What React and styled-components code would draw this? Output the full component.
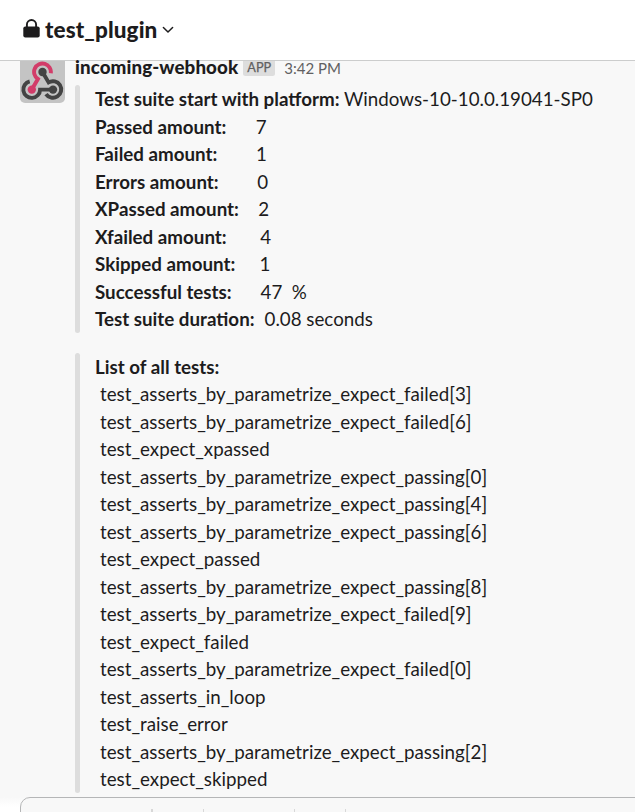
import React from 'react';
import styled, { createGlobalStyle } from 'styled-components';

const GlobalStyle = createGlobalStyle`
  * { box-sizing: border-box; }
  body { margin: 0; background: #f8f8f8; }
`;

const Page = styled.div`
  width: 635px;
  height: 812px;
  overflow: hidden;
  display: flex;
  flex-direction: column;
  background: #f8f8f8;
  color: #1d1c1d;
  font: 400 18.75px/27.5px Lato, sans-serif;
`;

const Header = styled.header`
  flex: none;
  height: 61px;
  display: flex;
  align-items: center;
  padding-left: 23px;
  background: #fff;
  border-bottom: 1px solid #cccdcd;
`;

const LockIcon = styled.svg`
  flex: none;
  width: 17px;
  height: 19px;
  margin-top: -3px;
`;

const ChannelName = styled.h1`
  margin: 0 0 0 5px;
  font-size: 22.5px;
  line-height: 30px;
  font-weight: 900;
  letter-spacing: 0.1px;
`;

const Chevron = styled.svg`
  flex: none;
  width: 12px;
  height: 8px;
  margin: -1px 0 0 5px;
`;

const MessageList = styled.main`
  flex: none;
  height: 736px;
`;

const Message = styled.article`
  display: flex;
  align-items: flex-start;
  gap: 10px;
  padding-left: 20px;
`;

const Avatar = styled.svg`
  flex: none;
  width: 45px;
  height: 42px;
  border-radius: 0 0 5px 5px;
  background: #c4c4c4;
`;

const Content = styled.div`
  flex: 1;
  min-width: 0;
`;

const Sender = styled.div`
  height: 24.25px;
  display: flex;
  align-items: flex-start;
  white-space: nowrap;
`;

const SenderName = styled.span`
  font-weight: 900;
  line-height: 12px;
  letter-spacing: 0.09px;
`;

const AppBadge = styled.span`
  width: 32px;
  height: 15px;
  margin-left: 5px;
  border-radius: 0 0 2.5px 2.5px;
  background: #dddddd;
  color: #616061;
  text-align: center;
  font-size: 12.7px;
  line-height: 12px;
  -webkit-text-stroke: 0.25px #616061;
`;

const Time = styled.time`
  margin-left: 9px;
  color: #616061;
  font-size: 15px;
  line-height: 15px;
`;

const Attachment = styled.section`
  display: flex;
  gap: 15px;
  margin-bottom: 20px;
  white-space: nowrap;
`;

const Bar = styled.div`
  width: 5px;
  border-radius: 5px;
  background: #dddddd;
`;

const Row = styled.div`
  display: flex;
  height: 27.5px;
`;

const Label = styled.span`
  width: ${(p) => p.$width}px;
  font-weight: 700;
`;

const Value = styled.span`
  white-space: pre;
`;

const TestName = styled.div`
  height: 27.5px;
  padding-left: 5px;
`;

const ComposerArea = styled.footer`
  flex: none;
  height: 15px;
  padding-left: 20px;
  background: linear-gradient(#f8f8f8, #fff 10px);
`;

const Composer = styled.div`
  width: 640px;
  height: 40px;
  border: 1px solid #b5b6b7;
  border-radius: 10px;
  background: #f8f8f8;
  display: flex;
  padding: 11px 0 0 130px;
`;

const Divider = styled.i`
  flex: none;
  width: ${(p) => p.$width || 1}px;
  height: 18px;
  margin-right: ${(p) => p.$gap}px;
  background: #d8d8d8;
`;

const summary = [
  ['Test suite start with platform:', 'Windows-10-10.0.19041-SP0', 249],
  ['Passed amount:', '7', 160.7],
  ['Failed amount:', '1', 161],
  ['Errors amount:', '0', 162.2],
  ['XPassed amount:', '2', 163.2],
  ['Xfailed amount:', '4', 165.2],
  ['Skipped amount:', '1', 164.5],
  ['Successful tests:', '47  %', 165.5],
  ['Test suite duration:', '0.08 seconds', 169.5],
];

const param = 'test_asserts_by_parametrize_expect_';
const tests = [
  param + 'failed[3]',
  param + 'failed[6]',
  'test_expect_xpassed',
  param + 'passing[0]',
  param + 'passing[4]',
  param + 'passing[6]',
  'test_expect_passed',
  param + 'passing[8]',
  param + 'failed[9]',
  'test_expect_failed',
  param + 'failed[0]',
  'test_asserts_in_loop',
  'test_raise_error',
  param + 'passing[2]',
  'test_expect_skipped',
];

export default function App() {
  return (
    <Page>
      <GlobalStyle />
      <Header>
        <LockIcon viewBox="0 0 17 19">
          <rect x="0.3" y="7.5" width="16.4" height="11" rx="2" fill="#1d1c1d" />
          <path d="M3.9 9V5.6a4.6 4.6 0 0 1 9.2 0V9" fill="none" stroke="#1d1c1d" strokeWidth="1.9" />
        </LockIcon>
        <ChannelName>test_plugin</ChannelName>
        <Chevron viewBox="0 0 12 8" fill="none" stroke="#1d1c1d" strokeWidth="1.5">
          <path d="M1.4 1.5 6 6l4.6-4.5" strokeLinecap="round" strokeLinejoin="round" />
        </Chevron>
      </Header>
      <MessageList>
        <Message>
          <Avatar viewBox="0 3 45 42" fill="none" strokeWidth="3.9">
            <g stroke="#434343">
              <path d="M22.5 14 28.6 24.4A8.3 8.3 0 1 1 26 36.1" />
              <path d="M33 31.6H20.1A8.4 8.4 0 1 1 9.7 23.3" />
            </g>
            <path d="M11.8 31.5 17.9 21A8.4 8.4 0 1 1 30.8 15.2" stroke="#d23c69" />
            <circle cx="22.5" cy="14" r="4.2" fill="#434343" />
            <circle cx="33" cy="31.6" r="4.2" fill="#434343" />
            <circle cx="11.8" cy="31.6" r="4.2" fill="#d23c69" />
          </Avatar>
          <Content>
            <Sender>
              <SenderName>incoming-webhook</SenderName>
              <AppBadge>APP</AppBadge>
              <Time>3:42 PM</Time>
            </Sender>
            <Attachment>
              <Bar />
              <div>
                {summary.map(([label, value, width]) => (
                  <Row key={label}>
                    <Label $width={width}>{label}</Label>
                    <Value>{value}</Value>
                  </Row>
                ))}
              </div>
            </Attachment>
            <Attachment>
              <Bar />
              <div>
                <Row><Label>List of all tests:</Label></Row>
                {tests.map((name) => <TestName key={name}>{name}</TestName>)}
              </div>
            </Attachment>
          </Content>
        </Message>
      </MessageList>
      <ComposerArea>
        <Composer>
          <Divider $width={2} $gap={50} />
          <Divider $gap={90} />
          <Divider $gap={50} />
          <Divider $gap={0} />
        </Composer>
      </ComposerArea>
    </Page>
  );
}
